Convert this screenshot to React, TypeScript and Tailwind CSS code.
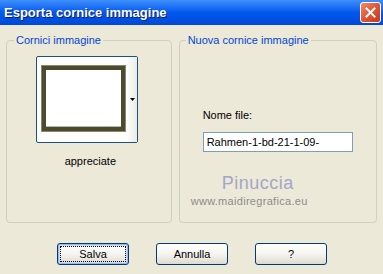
import React from 'react';

const XpButton: React.FC<{ label: string; isDefault?: boolean }> = ({ label, isDefault }) => (
  <button
    className={
      'w-[72px] h-[22px] rounded-[3px] border border-[#003C74] bg-gradient-to-b from-[#FFFFFF] via-[#F5F4EF] to-[#DEDACF] text-[11px] text-black flex items-center justify-center p-[2px] ' +
      (isDefault ? 'shadow-[inset_0_0_0_1px_#9DB9EB,inset_0_0_0_2px_#CEDCF6]' : '')
    }
  >
    <span
      className={
        'w-full h-full flex items-center justify-center ' +
        (isDefault ? 'outline outline-1 outline-dotted outline-black -outline-offset-1' : '')
      }
    >
      {label}
    </span>
  </button>
);

const App: React.FC = () => {
  return (
    <div className="w-[383px] h-[274px] bg-[#ECE9D8] overflow-hidden font-['Liberation_Sans',Arial,sans-serif] text-[11px] text-black">
      {/* title bar */}
      <div className="h-[25px] flex items-center justify-between pl-[4px] pr-[2px] bg-gradient-to-b from-[#3D8EFB] via-[#0058EE] to-[#0049D6]">
        <span className="text-white font-bold text-[13px] leading-none [text-shadow:1px_1px_0_#0A1C6E]">
          Esporta cornice immagine
        </span>
        <div className="w-[21px] h-[21px] rounded-[3px] border border-white bg-gradient-to-br from-[#F08A6C] via-[#E05532] to-[#C6391B] flex items-center justify-center">
          <svg width="11" height="11" viewBox="0 0 11 11">
            <path d="M1.5 1.5 L9.5 9.5 M9.5 1.5 L1.5 9.5" stroke="white" strokeWidth="2" strokeLinecap="square" />
          </svg>
        </div>
      </div>

      <div className="px-[6px] pt-[9px]">
        <div className="flex gap-[7px]">
          {/* left group */}
          <fieldset className="w-[167px] h-[189px] border border-[#D0D0BF] rounded-[4px] p-0 m-0 min-w-0">
            <legend className="ml-[7px] px-[2px] text-[#0046D5] leading-[13px]">Cornici immagine</legend>
            <div className="ml-[29px] mt-[9px] w-[102px] h-[87px] bg-white border border-[#1C5180] rounded-[2px] flex">
              <div className="flex-1 flex items-start pl-[5px] pt-[9px]">
                <div className="w-[83px] h-[65px] border-[4px] border-[#4C4A2F] bg-white shadow-[0_0_0_1px_#8A876C] flex items-end">
                  <div className="w-full h-[1px] bg-[#B8B6B0]" />
                </div>
              </div>
              <div className="w-[9px] bg-gradient-to-r from-[#FAFAF8] to-[#ECEBE6] flex items-center justify-center">
                <svg width="5" height="3" viewBox="0 0 5 3">
                  <path d="M0 0 H5 L2.5 3 Z" fill="black" />
                </svg>
              </div>
            </div>
            <div className="mt-[12px] pl-[3px] text-center leading-[13px]">appreciate</div>
          </fieldset>

          {/* right group */}
          <fieldset className="w-[200px] h-[189px] border border-[#D0D0BF] rounded-[4px] p-0 m-0 min-w-0">
            <legend className="ml-[6px] px-[2px] text-[#0046D5] leading-[13px]">Nuova cornice immagine</legend>
            <div className="ml-[23px] mt-[62px] leading-[13px]">Nome file:</div>
            <div className="ml-[23px] mt-[10px] w-[150px] h-[20px] bg-white border border-[#7F9DB9] flex items-center px-[3px] leading-none">
              Rahmen-1-bd-21-1-09-
            </div>
            <div className="ml-[42px] mt-[22px] w-[72px] text-center text-[18px] leading-[18px] tracking-[0.5px] text-[#A3A6CA]">
              Pinuccia
            </div>
            <div className="ml-[11px] mt-[3px] text-[11px] leading-[12px] tracking-[0.3px] text-[#8C8C8C]">www.maidiregrafica.eu</div>
          </fieldset>
        </div>

        <div className="mt-[20px] flex justify-center gap-[27px] pl-[1px]">
          <XpButton label="Salva" isDefault />
          <XpButton label="Annulla" />
          <XpButton label="?" />
        </div>
      </div>
    </div>
  );
};

export default App;
